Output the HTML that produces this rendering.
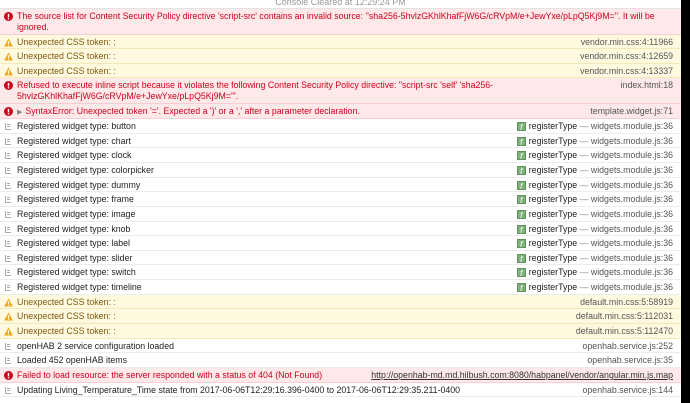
<!DOCTYPE html>
<html><head><meta charset="utf-8"><style>
*{margin:0;padding:0;box-sizing:border-box}
body{width:690px;height:403px;background:#000;font-family:"Liberation Sans",sans-serif;font-size:8.8px;overflow:hidden;position:relative}
#c{position:absolute;left:0;top:0;width:681px;height:403px;background:#fff}
.hd{height:9px;text-align:center;color:#999;font-size:9px;line-height:4px;overflow:hidden;border-bottom:1px solid #e3e3e3}
.r{position:relative;height:14.65px;line-height:14.5px;padding-left:17px;padding-right:8px;border-bottom:1px solid #ececec;white-space:nowrap;color:#222}
.r.two{height:25.5px;line-height:11.5px;padding-top:1.5px;white-space:normal}
.r.big{height:26px}
.e{background:#fde9ea;color:#d0021b;border-bottom-color:#f7cfd2}
.w{background:#fef9df;color:#7e5a0e;border-bottom-color:#f2e8b8}
.src{position:absolute;right:8px;top:0;color:#555}
.two .src{top:1.5px}
.ic{position:absolute;left:4px;top:3px;width:9px;height:9px}
.two .ic{top:3px}
.l{position:absolute;left:5px;top:4px;width:6px;height:7px;border:1px solid #aaa;border-top:none;border-right:none}
.l:after{content:"";position:absolute;left:1px;top:1px;width:3px;height:1px;background:#aaa;box-shadow:0 2px 0 #aaa}
.f{display:inline-block;width:9px;height:9px;background:#7fb27a;color:#fff;font-style:italic;font-size:8px;line-height:9px;text-align:center;vertical-align:-1px;margin-right:3px;border:1px solid #5e9458}
.g{color:#888}
.k{color:#222}
a{color:#333;text-decoration:underline}
.tri{color:#888;font-size:7px;margin-right:3px}
</style></head><body><div id="c">
<div class="hd">Console Cleared at 12:29:24 PM</div>
<svg width="0" height="0" style="position:absolute"><defs>
<symbol id="er" viewBox="0 0 10 10"><circle cx="5" cy="5" r="5" fill="#d0021b"/><rect x="4.2" y="2" width="1.6" height="4" fill="#fff"/><rect x="4.2" y="6.8" width="1.6" height="1.5" fill="#fff"/></symbol>
<symbol id="wa" viewBox="0 0 10 10"><path d="M5 0.5L9.8 9.5H0.2Z" fill="#f0a70f"/><rect x="4.3" y="3.5" width="1.4" height="3.2" fill="#fff"/><rect x="4.3" y="7.4" width="1.4" height="1.3" fill="#fff"/></symbol>
</defs></svg>
<div class="r e two"><svg class="ic"><use href="#er"/></svg>The source list for Content Security Policy directive 'script-src' contains an invalid source: ''sha256-5hvlzGKhlKhafFjW6G/cRVpM/e+JewYxe/pLpQ5Kj9M=''. It will be<br>ignored.</div>
<div class="r w"><svg class="ic"><use href="#wa"/></svg>Unexpected CSS token: :<span class="src">vendor.min.css:4:11966</span></div>
<div class="r w"><svg class="ic"><use href="#wa"/></svg>Unexpected CSS token: :<span class="src">vendor.min.css:4:12659</span></div>
<div class="r w"><svg class="ic"><use href="#wa"/></svg>Unexpected CSS token: :<span class="src">vendor.min.css:4:13337</span></div>
<div class="r e two big"><svg class="ic"><use href="#er"/></svg>Refused to execute inline script because it violates the following Content Security Policy directive: "script-src 'self' 'sha256-<br>5hvlzGKhlKhafFjW6G/cRVpM/e+JewYxe/pLpQ5Kj9M='".<span class="src">index.html:18</span></div>
<div class="r e"><svg class="ic"><use href="#er"/></svg><span class="tri">▶</span>SyntaxError: Unexpected token '='. Expected a ')' or a ',' after a parameter declaration.<span class="src">template.widget.js:71</span></div>
<div class="r"><i class="l"></i>Registered widget type: button<span class="src"><span class="f">f</span><span class="k">registerType</span> <span class="g">—</span> widgets.module.js:36</span></div>
<div class="r"><i class="l"></i>Registered widget type: chart<span class="src"><span class="f">f</span><span class="k">registerType</span> <span class="g">—</span> widgets.module.js:36</span></div>
<div class="r"><i class="l"></i>Registered widget type: clock<span class="src"><span class="f">f</span><span class="k">registerType</span> <span class="g">—</span> widgets.module.js:36</span></div>
<div class="r"><i class="l"></i>Registered widget type: colorpicker<span class="src"><span class="f">f</span><span class="k">registerType</span> <span class="g">—</span> widgets.module.js:36</span></div>
<div class="r"><i class="l"></i>Registered widget type: dummy<span class="src"><span class="f">f</span><span class="k">registerType</span> <span class="g">—</span> widgets.module.js:36</span></div>
<div class="r"><i class="l"></i>Registered widget type: frame<span class="src"><span class="f">f</span><span class="k">registerType</span> <span class="g">—</span> widgets.module.js:36</span></div>
<div class="r"><i class="l"></i>Registered widget type: image<span class="src"><span class="f">f</span><span class="k">registerType</span> <span class="g">—</span> widgets.module.js:36</span></div>
<div class="r"><i class="l"></i>Registered widget type: knob<span class="src"><span class="f">f</span><span class="k">registerType</span> <span class="g">—</span> widgets.module.js:36</span></div>
<div class="r"><i class="l"></i>Registered widget type: label<span class="src"><span class="f">f</span><span class="k">registerType</span> <span class="g">—</span> widgets.module.js:36</span></div>
<div class="r"><i class="l"></i>Registered widget type: slider<span class="src"><span class="f">f</span><span class="k">registerType</span> <span class="g">—</span> widgets.module.js:36</span></div>
<div class="r"><i class="l"></i>Registered widget type: switch<span class="src"><span class="f">f</span><span class="k">registerType</span> <span class="g">—</span> widgets.module.js:36</span></div>
<div class="r"><i class="l"></i>Registered widget type: timeline<span class="src"><span class="f">f</span><span class="k">registerType</span> <span class="g">—</span> widgets.module.js:36</span></div>
<div class="r w"><svg class="ic"><use href="#wa"/></svg>Unexpected CSS token: :<span class="src">default.min.css:5:58919</span></div>
<div class="r w"><svg class="ic"><use href="#wa"/></svg>Unexpected CSS token: :<span class="src">default.min.css:5:112031</span></div>
<div class="r w"><svg class="ic"><use href="#wa"/></svg>Unexpected CSS token: :<span class="src">default.min.css:5:112470</span></div>
<div class="r"><i class="l"></i>openHAB 2 service configuration loaded<span class="src">openhab.service.js:252</span></div>
<div class="r"><i class="l"></i>Loaded 452 openHAB items<span class="src">openhab.service.js:35</span></div>
<div class="r e"><svg class="ic"><use href="#er"/></svg>Failed to load resource: the server responded with a status of 404 (Not Found)<span class="src"><a>http://openhab-md.md.hilbush.com:8080/habpanel/vendor/angular.min.js.map</a></span></div>
<div class="r"><i class="l"></i>Updating Living_Temperature_Time state from 2017-06-06T12:29:16.396-0400 to 2017-06-06T12:29:35.211-0400<span class="src">openhab.service.js:144</span></div>
</div></body></html>
